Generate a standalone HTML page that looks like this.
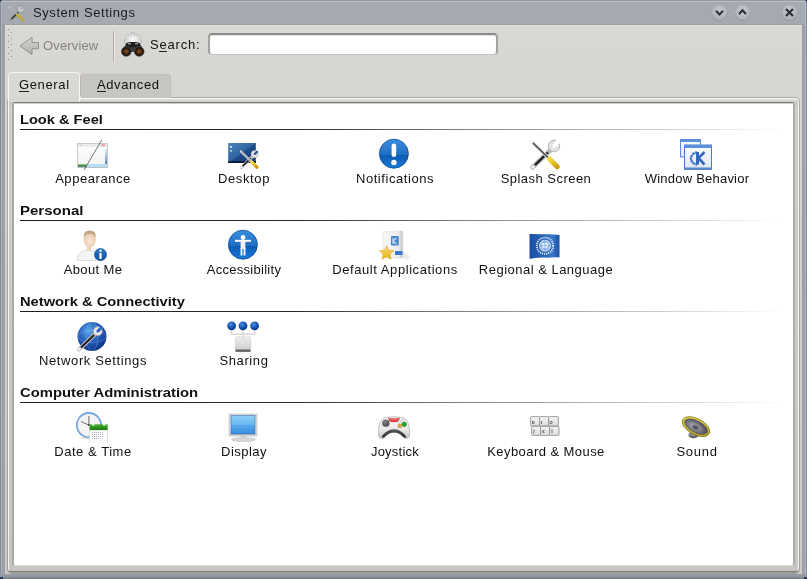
<!DOCTYPE html>
<html><head><meta charset="utf-8">
<style>
*{margin:0;padding:0;box-sizing:border-box}
html,body{width:807px;height:579px;overflow:hidden;background:#1b2c50}
body{font-family:"Liberation Sans",sans-serif;position:relative}
.txt,.sec,.lbl{will-change:transform}
.abs{position:absolute}
.txt{position:absolute;font-size:13px;line-height:15px;color:#111;white-space:nowrap}
.sec{position:absolute;left:20px;transform-origin:0 0;font-size:13px;line-height:15px;font-weight:bold;color:#111;white-space:nowrap}
.line{position:absolute;left:20px;width:765px;height:1px;background:linear-gradient(to right,#1e1e1e 0%,#2a2a2a 36%,#777 55%,#b4b4b4 75%,#e0e0e0 90%,#fff 100%)}
.lbl{position:absolute;font-size:13px;line-height:15px;color:#111;white-space:nowrap;text-align:center;width:200px}
.ic{position:absolute;width:32px;height:32px}
.ic svg{display:block}
.u{position:absolute;height:1px;background:#222}
</style></head><body>
<!-- window frame -->
<div class="abs" style="left:0;top:0;width:807px;height:579px;background:#a5aab2;border-radius:4px 4px 0 0"></div>
<div class="abs" style="left:0;top:0;width:807px;height:579px;border-radius:4px 4px 0 0;border-top:1px solid #969ca5;border-left:1px solid #858c97;border-right:1px solid #7e8590"></div>
<div class="abs" style="left:1px;top:1px;width:805px;height:1px;background:#b9bec5;border-radius:3px 3px 0 0"></div>
<div class="abs" style="left:2px;top:24px;width:3px;height:550px;background:#9ca0a7"></div>
<div class="abs" style="left:1px;top:2px;width:1px;height:577px;background:#acb1bb"></div>
<div class="abs" style="left:803px;top:24px;width:2px;height:550px;background:#9aa1ab"></div>
<div class="abs" style="left:805px;top:2px;width:1px;height:577px;background:#b3bac4"></div>
<div class="abs" style="left:0;top:574px;width:807px;height:5px;background:linear-gradient(#9aa0a8 0px,#8e949e 3px,#6e7580 5px)"></div>
<div class="abs" style="left:0;top:577px;width:3px;height:2px;background:#27375a"></div>
<div class="abs" style="left:804px;top:577px;width:3px;height:2px;background:#27375a"></div>
<!-- title icon -->
<svg class="abs" style="left:0;top:0" width="30" height="25" viewBox="0 0 30 25">
<line x1="10.5" y1="20" x2="18.5" y2="12" stroke="#9c9c9c" stroke-width="3.2" stroke-linecap="round"/>
<line x1="11.5" y1="19" x2="18" y2="12.5" stroke="#2e2e2e" stroke-width="1.5"/>
<circle cx="20.8" cy="9.3" r="3.3" fill="#cfcfcf" stroke="#7c7c7c" stroke-width="0.6"/>
<path d="M21 9.3 L22.5 5.8 L25 8 Z" fill="#a6abb3"/>
<circle cx="20.8" cy="9.3" r="1" fill="#a6abb3"/>
<line x1="9.7" y1="7.3" x2="16.8" y2="14.2" stroke="#d8d8d8" stroke-width="1.8" stroke-linecap="round"/>
<line x1="10.2" y1="7.8" x2="16.8" y2="14.2" stroke="#4a4a4a" stroke-width="0.7"/>
<line x1="17.5" y1="15" x2="23.3" y2="20.6" stroke="#b8a030" stroke-width="2.8" stroke-linecap="round"/>
<line x1="17.5" y1="14.6" x2="23" y2="20" stroke="#e0cc60" stroke-width="0.9" stroke-linecap="round"/>
</svg>
<div class="txt" style="left:33px;top:5px;color:#1a1a1a;letter-spacing:0.57px">System Settings</div>
<!-- title buttons -->
<svg class="abs" style="left:706px;top:0" width="101" height="25" viewBox="706 0 101 25">
<defs><radialGradient id="btn" cx="0.5" cy="0.35" r="0.6"><stop offset="0" stop-color="#c4c8ce"/><stop offset="1" stop-color="#aeb3ba"/></radialGradient></defs>
<circle cx="719.5" cy="13.3" r="7.8" fill="#8a9099" opacity="0.7"/>
<circle cx="719.5" cy="12.5" r="7.5" fill="url(#btn)"/>
<path d="M716 10.8 L719.5 14.5 L723 10.8" stroke="#2c3038" stroke-width="2" fill="none"/>
<circle cx="742.5" cy="13.3" r="7.8" fill="#8a9099" opacity="0.7"/>
<circle cx="742.5" cy="12.5" r="7.5" fill="url(#btn)"/>
<path d="M739 14 L742.5 10.3 L746 14" stroke="#2c3038" stroke-width="2" fill="none"/>
<circle cx="789.5" cy="13.3" r="7.8" fill="#8a9099" opacity="0.7"/>
<circle cx="789.5" cy="12.5" r="7.5" fill="url(#btn)"/>
<path d="M786 9 L793 16 M793 9 L786 16" stroke="#2c3038" stroke-width="2.2" fill="none"/>
</svg>
<!-- content -->
<div class="abs" style="left:4px;top:24px;width:799px;height:1px;background:#9ca1a8"></div>
<div class="abs" style="left:4px;top:24px;width:1px;height:550px;background:#9ca1a8"></div>
<div class="abs" style="left:802px;top:24px;width:1px;height:550px;background:#9ca1a8"></div>
<div class="abs" style="left:5px;top:25px;width:797px;height:549px;background:linear-gradient(#dad8d4 0px,#d7d5d1 70px,#cdcbc7 100%)"></div>
<div class="abs" style="left:5px;top:25px;width:797px;height:1px;background:#e2e0dc"></div>
<!-- toolbar handle -->
<svg class="abs" style="left:0;top:0" width="20" height="64">
<g fill="#8e8c88"><rect x="8" y="29" width="1" height="1"/><rect x="8" y="35" width="1" height="1"/><rect x="8" y="41" width="1" height="1"/><rect x="8" y="47" width="1" height="1"/><rect x="8" y="53" width="1" height="1"/><rect x="8" y="59" width="1" height="1"/>
<rect x="11" y="32" width="1" height="1"/><rect x="11" y="38" width="1" height="1"/><rect x="11" y="44" width="1" height="1"/><rect x="11" y="50" width="1" height="1"/><rect x="11" y="56" width="1" height="1"/></g>
</svg>
<!-- back arrow -->
<svg class="abs" style="left:0;top:0" width="45" height="60">
<defs><linearGradient id="arr" x1="0" y1="0" x2="0" y2="1"><stop offset="0" stop-color="#d6d5d3"/><stop offset="1" stop-color="#b0afac"/></linearGradient></defs>
<path d="M20 46 L32 37.3 L32 42.5 L38.5 42.5 L38.5 48.8 L32 48.8 L32 54.5 Z" fill="url(#arr)" stroke="#8c8b88" stroke-width="0.9" stroke-linejoin="round"/>
</svg>
<div class="txt" style="left:43px;top:38px;color:#858380;letter-spacing:0.15px">Overview</div>
<div class="abs" style="left:113px;top:31px;width:1px;height:31px;background:#b0ada8"></div>
<div class="abs" style="left:114px;top:31px;width:1px;height:31px;background:#eceae6"></div>
<!-- binoculars -->
<svg class="abs" style="left:118px;top:30px" width="30" height="30" viewBox="0 0 30 30">
<defs><radialGradient id="gear" cx="0.5" cy="0.4" r="0.6"><stop offset="0" stop-color="#ffffff"/><stop offset="1" stop-color="#cfcfcf"/></radialGradient>
<radialGradient id="lens" cx="0.5" cy="0.5" r="0.5"><stop offset="0" stop-color="#8a5020"/><stop offset="0.6" stop-color="#5a3210"/><stop offset="1" stop-color="#2a1606"/></radialGradient></defs>
<g transform="translate(15 11.5) scale(1.15)">
<g fill="#e8e8e8" stroke="#9c9c9c" stroke-width="0.5">
<rect x="-1.3" y="-7.4" width="2.6" height="2.6"/><rect x="-1.3" y="-7.4" width="2.6" height="2.6" transform="rotate(45)"/><rect x="-1.3" y="-7.4" width="2.6" height="2.6" transform="rotate(-45)"/><rect x="-1.3" y="-7.4" width="2.6" height="2.6" transform="rotate(90)"/><rect x="-1.3" y="-7.4" width="2.6" height="2.6" transform="rotate(-90)"/><rect x="-1.3" y="-7.4" width="2.6" height="2.6" transform="rotate(135)"/><rect x="-1.3" y="-7.4" width="2.6" height="2.6" transform="rotate(-135)"/></g>
<circle r="5.6" fill="url(#gear)"/>
</g>
<path d="M8.5 13 L12 12 L18 12 L21.5 13 L25 19.5 L5 19.5 Z" fill="#1e1e1e"/>
<rect x="10" y="13" width="3" height="1.4" fill="#9a9a9a"/><rect x="17" y="13" width="3" height="1.4" fill="#9a9a9a"/>
<rect x="12.5" y="17" width="5" height="5" fill="#3a3a3a"/>
<circle cx="8.3" cy="21.5" r="5" fill="#1a1a1a" stroke="#6a6a6a" stroke-width="0.5"/>
<circle cx="21.2" cy="21.5" r="5" fill="#1a1a1a" stroke="#6a6a6a" stroke-width="0.5"/>
<circle cx="8.3" cy="21.5" r="3.4" fill="url(#lens)"/>
<circle cx="21.2" cy="21.5" r="3.4" fill="url(#lens)"/>
</svg>
<div class="txt" style="left:150px;top:37px;letter-spacing:0.8px">Search:</div>
<div class="u" style="left:159px;top:51px;width:8px"></div>
<div class="abs" style="left:208px;top:33px;width:290px;height:22px;background:#fff;border-radius:4px;border-top:2px solid #8e8c88;border-left:2px solid #a4a29e;border-right:2px solid #a4a29e;border-bottom:1px solid #c4c2be;box-shadow:inset 0 1px 1px rgba(0,0,0,0.12)"></div>
<!-- tab panel -->
<div class="abs" style="left:7px;top:97px;width:793px;height:477px;border-radius:5px;background:linear-gradient(rgba(0,0,0,0.2),rgba(0,0,0,0.22));"></div>
<div class="abs" style="left:8px;top:98px;width:791px;height:474px;border-radius:4px;background:linear-gradient(#e6e4e1 0px,#d2d0cc 2px,#c6c4c0 4px,#d0cec9 8px,#c8c6c1 100%);border:1px solid #f5f4f2;border-bottom-color:#807e7a"></div>
<div class="abs" style="left:12px;top:102px;width:783px;height:464px;border-radius:3px;background:#fff;border-top:1px solid #7c7a77;border-left:2px solid #aba9a4;border-right:2px solid #aeaca7;border-bottom:1px solid #c6c4c0"></div>
<div class="abs" style="left:14px;top:103px;width:779px;height:1px;background:#cfcdc9"></div>
<div class="abs" style="left:14px;top:565px;width:779px;height:1px;background:#e0dedb"></div>
<div class="abs" style="left:8px;top:72px;width:72px;height:30px;background:#dad8d4;border-radius:4px 4px 0 0;border:1px solid #f5f4f2;border-bottom:none"></div>
<div class="abs" style="left:9px;top:98px;width:70px;height:4px;background:#d8d6d2"></div>
<div class="abs" style="left:79px;top:92px;width:8px;height:7px;background:#f5f4f2"></div>
<div class="abs" style="left:80px;top:74px;width:91px;height:24px;background:#c8c6c1;border-radius:4px 4px 0 4px;border-top:1px solid #c0beb9;border-right:1px solid #bebcb7;box-shadow:inset 1px 0 0 #b8b6b1"></div>
<div class="txt" style="left:19px;top:77px;letter-spacing:0.63px">General</div>
<div class="u" style="left:19px;top:91px;width:10px"></div>
<div class="txt" style="left:97px;top:77px;letter-spacing:0.59px">Advanced</div>
<div class="u" style="left:97px;top:91px;width:9px"></div>
<div class="sec" style="top:112px;transform:scaleX(1.125)">Look &amp; Feel</div>
<div class="line" style="top:129px"></div>
<div class="ic" style="left:76px;top:138px"><svg width="32" height="32" viewBox="0 0 32 32">
<defs><linearGradient id="apR" x1="0" y1="0" x2="0" y2="1"><stop offset="0" stop-color="#e0eef8"/><stop offset="0.5" stop-color="#8ab8e0"/><stop offset="1" stop-color="#3a6cb4"/></linearGradient>
<linearGradient id="apW" x1="0" y1="0" x2="0" y2="1"><stop offset="0" stop-color="#fdfdfd"/><stop offset="1" stop-color="#f2f2f2"/></linearGradient></defs>
<rect x="1.5" y="5.5" width="30" height="24" fill="url(#apW)" stroke="#c6c6c6" stroke-width="0.9"/>
<rect x="2" y="6" width="29" height="2.8" fill="#ececec"/>
<rect x="3.5" y="6.8" width="3" height="0.8" fill="#c0c0c0"/>
<rect x="25.2" y="6.3" width="4" height="1.9" fill="#e498a8"/>
<rect x="29.2" y="11" width="1.8" height="16" fill="url(#apR)"/>
<rect x="2" y="26" width="29" height="3.2" fill="#b8def4"/>
<rect x="2" y="26" width="8.5" height="1.3" fill="#80c868"/>
<rect x="2" y="27.3" width="8.5" height="1.4" fill="#2e6a24"/>
<rect x="2" y="29" width="29" height="0.6" fill="#a8b4bc"/>
<line x1="25.7" y1="2" x2="8" y2="32" stroke="#4a4a4a" stroke-width="0.75"/>
</svg></div>
<div class="lbl" style="left:-7.5px;top:171px;letter-spacing:0.56px">Appearance</div>
<div class="ic" style="left:227px;top:138px"><svg width="32" height="32" viewBox="0 0 32 32">
<defs><linearGradient id="dkB" x1="0" y1="0" x2="1" y2="1"><stop offset="0" stop-color="#4d86c0"/><stop offset="0.5" stop-color="#2f62a0"/><stop offset="0.5" stop-color="#1f4c88"/><stop offset="1" stop-color="#143a6e"/></linearGradient>
<linearGradient id="yel" x1="0" y1="0" x2="1" y2="1"><stop offset="0" stop-color="#f8dc40"/><stop offset="1" stop-color="#c89a10"/></linearGradient></defs>
<rect x="1.2" y="5" width="27.6" height="20" fill="url(#dkB)"/>
<rect x="1.2" y="23.2" width="27.6" height="1.8" fill="#0a1a30"/>
<rect x="3" y="8" width="2" height="1.8" fill="#d8e4f0"/>
<rect x="3" y="12" width="2" height="1.8" fill="#b8d4a0"/>
<g transform="translate(12 11) scale(0.63)">
<line x1="3.5" y1="29.5" x2="21" y2="12.5" stroke="#c8c8c8" stroke-width="5" stroke-linecap="round"/>
<line x1="6" y1="27" x2="19" y2="14.5" stroke="#1e1e1e" stroke-width="2.6"/>
<circle cx="3.8" cy="29.2" r="1.8" fill="#f4f4f4"/>
<circle cx="25" cy="8" r="5.8" fill="#e8e8e8" stroke="#a0a0a0" stroke-width="0.8"/><path d="M25 8 L28.5 4.5" stroke="#2a5a98" stroke-width="3.6" stroke-linecap="round"/>
<line x1="3" y1="4" x2="19" y2="19.5" stroke="#e8e8e8" stroke-width="3.6" stroke-linecap="round"/>
<line x1="3.5" y1="4.5" x2="19" y2="19.5" stroke="#5a5a5a" stroke-width="1.2"/>
<line x1="20.5" y1="21" x2="28.2" y2="28.8" stroke="url(#yel)" stroke-width="5.5" stroke-linecap="round"/>
</g>
</svg></div>
<div class="lbl" style="left:143.5px;top:171px;letter-spacing:0.61px">Desktop</div>
<div class="ic" style="left:378px;top:138px"><svg width="32" height="32" viewBox="0 0 32 32">
<defs><linearGradient id="nB" x1="0" y1="0" x2="0" y2="1"><stop offset="0" stop-color="#3a8ee0"/><stop offset="0.55" stop-color="#1f6cc0"/><stop offset="0.56" stop-color="#0c5cb4"/><stop offset="1" stop-color="#1a7ad8"/></linearGradient></defs>
<circle cx="15.9" cy="15.7" r="14.5" fill="url(#nB)" stroke="#0a4a94" stroke-width="0.8"/>
<rect x="13.6" y="5.5" width="4.6" height="13.5" rx="2.3" fill="#fff"/>
<circle cx="15.9" cy="24.4" r="2.7" fill="#fff"/>
</svg></div>
<div class="lbl" style="left:294.5px;top:171px;letter-spacing:0.56px">Notifications</div>
<div class="ic" style="left:529px;top:138px"><svg width="32" height="32" viewBox="0 0 32 32">
<defs><linearGradient id="yel2" x1="0" y1="0" x2="1" y2="1"><stop offset="0" stop-color="#f8dc40"/><stop offset="1" stop-color="#d0a010"/></linearGradient></defs>
<line x1="3.5" y1="29.5" x2="21" y2="12.5" stroke="#b8b8b8" stroke-width="4.6" stroke-linecap="round"/>
<line x1="6" y1="27" x2="19" y2="14.5" stroke="#1e1e1e" stroke-width="2.4"/>
<circle cx="3.8" cy="29.2" r="1.6" fill="#f4f4f4"/>
<circle cx="25" cy="8" r="5.8" fill="#e2e2e2" stroke="#a0a0a0" stroke-width="0.7"/><path d="M25 8 L28.5 4.5" stroke="#fff" stroke-width="3.6" stroke-linecap="round"/><path d="M26.5 6.5 L31 2" stroke="#fff" stroke-width="4.2"/>
<line x1="3" y1="4" x2="19" y2="19.5" stroke="#d8d8d8" stroke-width="3.4" stroke-linecap="round"/>
<line x1="3.5" y1="4.5" x2="19" y2="19.5" stroke="#3a3a3a" stroke-width="1.2"/>
<circle cx="3" cy="4" r="1.4" fill="#fafafa"/>
<line x1="20.5" y1="21" x2="28.2" y2="28.8" stroke="url(#yel2)" stroke-width="5" stroke-linecap="round"/>
</svg></div>
<div class="lbl" style="left:445.5px;top:171px;letter-spacing:0.47px">Splash Screen</div>
<div class="ic" style="left:680px;top:138px"><svg width="32" height="32" viewBox="0 0 32 32">
<defs><linearGradient id="wbW" x1="0" y1="0" x2="0" y2="1"><stop offset="0" stop-color="#ffffff"/><stop offset="1" stop-color="#dde4ee"/></linearGradient></defs>
<rect x="0.5" y="1.5" width="20" height="17.5" fill="url(#wbW)" stroke="#5a8ad0"/>
<rect x="0.5" y="1.5" width="20" height="2.5" fill="#5a92e0"/>
<rect x="4.5" y="7" width="27" height="24.5" fill="url(#wbW)" stroke="#4a7ec8"/>
<rect x="4.5" y="7" width="27" height="3" fill="#5a92e0"/>
<rect x="4.5" y="29.5" width="27" height="2" fill="#5a8ad0"/>
<path d="M17 14.5 A6 6 0 0 0 17 26.5" fill="none" stroke="#3a72c8" stroke-width="2.4" stroke-dasharray="1.8 1"/>
<path d="M16.5 15 A5.2 5.2 0 0 0 16.5 26" fill="none" stroke="#3a72c8" stroke-width="1"/>
<rect x="16" y="14" width="3" height="12.5" fill="#2e68c0"/>
<path d="M18.5 20.2 L24.5 14 M18.5 20.2 L24.5 26.5" stroke="#2e68c0" stroke-width="2.6" fill="none"/>
</svg></div>
<div class="lbl" style="left:596.5px;top:171px;letter-spacing:0.22px">Window Behavior</div>
<div class="sec" style="top:203px;transform:scaleX(1.155)">Personal</div>
<div class="line" style="top:220px"></div>
<div class="ic" style="left:76px;top:229px"><svg width="32" height="32" viewBox="0 0 32 32">
<defs><radialGradient id="face" cx="0.5" cy="0.6" r="0.6"><stop offset="0" stop-color="#fbe8d8"/><stop offset="1" stop-color="#e8c4a4"/></radialGradient>
<linearGradient id="iB" x1="0" y1="0" x2="0" y2="1"><stop offset="0" stop-color="#2e78c8"/><stop offset="1" stop-color="#0c4e9c"/></linearGradient></defs>
<path d="M1.5 31.5 C1.5 24 6 21.5 13 21.5 C18 21.5 20 23 20 26 L20 31.5 Z" fill="#f4f4f4" stroke="#d0d0d0" stroke-width="0.7"/>
<rect x="11" y="16" width="4" height="6" fill="#efd4bc"/>
<ellipse cx="13.7" cy="10.5" rx="6" ry="8" fill="url(#face)"/>
<path d="M7.8 9 C7.5 3 10 1.8 13.7 1.8 C17.5 1.8 20 3 19.7 9 C18.5 5.5 16 5 13.7 5 C11 5 9 5.5 7.8 9 Z" fill="#c4a482"/>
<circle cx="24.5" cy="25.5" r="6.4" fill="url(#iB)"/>
<circle cx="24.5" cy="21.8" r="1.3" fill="#fff"/>
<rect x="23.4" y="24" width="2.2" height="6" fill="#fff"/>
</svg></div>
<div class="lbl" style="left:-7.5px;top:262px;letter-spacing:0.36px">About Me</div>
<div class="ic" style="left:227px;top:229px"><svg width="32" height="32" viewBox="0 0 32 32">
<circle cx="15.9" cy="15.7" r="14.5" fill="url(#nB)" stroke="#0a4a94" stroke-width="0.8"/>
<circle cx="16" cy="8.5" r="2.4" fill="#fff"/>
<rect x="8" y="10.8" width="16" height="2" fill="#fff"/>
<rect x="13.6" y="12" width="4.8" height="8" fill="#eef2f8"/>
<rect x="13.6" y="19" width="1.8" height="7.5" fill="#fff"/>
<rect x="16.6" y="19" width="1.8" height="7.5" fill="#fff"/>
</svg></div>
<div class="lbl" style="left:143.5px;top:262px;letter-spacing:0.27px">Accessibility</div>
<div class="ic" style="left:378px;top:229px"><svg width="32" height="32" viewBox="0 0 32 32">
<defs><linearGradient id="boxG" x1="0" y1="0" x2="1" y2="0"><stop offset="0" stop-color="#f8f8f8"/><stop offset="0.8" stop-color="#ececec"/><stop offset="1" stop-color="#c8c8c8"/></linearGradient>
<linearGradient id="starG" x1="0" y1="0" x2="0" y2="1"><stop offset="0" stop-color="#f8d888"/><stop offset="1" stop-color="#e8b800"/></linearGradient></defs>
<path d="M25 22 L32 27 L29 31 L24 29 Z" fill="#e0e0e0" opacity="0.6"/>
<path d="M5 3 L22.5 1.8 L24.7 3 L24.7 28 L22.5 29.2 L5 28 Z" fill="url(#boxG)" stroke="#d8d8d8" stroke-width="0.5"/>
<rect x="22.5" y="2" width="2.2" height="27" fill="#d0d0d0"/>
<rect x="13" y="7" width="7.8" height="9.5" rx="0.8" fill="#4a86cc"/>
<path d="M15 9 V15 M15 12 L18.5 9 M15 12 L18.5 15" stroke="#cfe0f4" stroke-width="1.2" fill="none"/>
<rect x="17" y="22" width="7.5" height="4" fill="#3a78c8"/>
<path d="M8.6 16.7 L10.7 21.2 L15.8 21.8 L12 25.2 L13.1 30.3 L8.6 27.7 L4.1 30.3 L5.2 25.2 L1.4 21.8 L6.5 21.2 Z" fill="url(#starG)" stroke="#d8a820" stroke-width="0.6" stroke-linejoin="round"/>
</svg></div>
<div class="lbl" style="left:294.5px;top:262px;letter-spacing:0.57px">Default Applications</div>
<div class="ic" style="left:529px;top:229px"><svg width="32" height="32" viewBox="0 0 32 32">
<defs><linearGradient id="flG" x1="0" y1="0" x2="1" y2="0"><stop offset="0" stop-color="#1a4ea4"/><stop offset="0.55" stop-color="#2c68bc"/><stop offset="0.75" stop-color="#3c7ccc"/><stop offset="1" stop-color="#1a50a8"/></linearGradient></defs>
<path d="M0.5 5 C6 4.6 10 5.4 15 5.2 C21 5 26 5.5 30.5 6 L30.5 28.5 C25 28 20 29 15 28.6 C9 28.2 5 29.6 0.5 29.8 Z" fill="url(#flG)"/>
<circle cx="16" cy="16.7" r="8.2" fill="none" stroke="#e4eefa" stroke-width="1.7" stroke-dasharray="1.2 0.9"/>
<circle cx="16" cy="16.7" r="5.6" fill="#9cc0ec"/>
<circle cx="16" cy="16.7" r="5.6" fill="none" stroke="#f0f6fc" stroke-width="0.7"/>
<path d="M13 14.5 C14.5 13.5 15.5 15 17 14 C18.5 13.2 19 15 19.5 16.5 C18.5 18.5 17 19.5 15 19 C13.5 18.5 12.5 17 13 14.5 Z" fill="#f4f8fc"/>
<path d="M16 11.1 V22.3 M10.4 16.7 H21.6" stroke="#5a8ed8" stroke-width="0.6"/>
</svg></div>
<div class="lbl" style="left:445.5px;top:262px;letter-spacing:0.49px">Regional &amp; Language</div>
<div class="sec" style="top:294px;transform:scaleX(1.13)">Network &amp; Connectivity</div>
<div class="line" style="top:311px"></div>
<div class="ic" style="left:76px;top:320px"><svg width="32" height="32" viewBox="0 0 32 32">
<defs><radialGradient id="glG" cx="0.4" cy="0.3" r="0.75"><stop offset="0" stop-color="#5aa8ec"/><stop offset="0.45" stop-color="#2a64c0"/><stop offset="1" stop-color="#0a2e80"/></radialGradient></defs>
<circle cx="16" cy="16.5" r="14.5" fill="url(#glG)"/>
<ellipse cx="16" cy="16.5" rx="14" ry="6" fill="none" stroke="#8cc0f0" stroke-width="0.5" opacity="0.6"/>
<ellipse cx="16" cy="16.5" rx="6" ry="14" fill="none" stroke="#8cc0f0" stroke-width="0.5" opacity="0.6"/>
<line x1="3" y1="29.5" x2="19" y2="14" stroke="#c4c4c4" stroke-width="4" stroke-linecap="round"/>
<line x1="5" y1="27.5" x2="18" y2="15" stroke="#1e1e1e" stroke-width="2"/>
<circle cx="3.2" cy="29.3" r="1.4" fill="#f4f4f4"/>
<circle cx="21.8" cy="11.2" r="4.6" fill="#e6e6e6" stroke="#8a8a8a" stroke-width="0.6"/>
<path d="M21.8 11.2 L24.8 8.2" stroke="#2a60b8" stroke-width="2.8" stroke-linecap="round"/>
<path d="M23.5 9.5 L25.8 7.2" stroke="#3a78cc" stroke-width="3"/>
</svg></div>
<div class="lbl" style="left:-7.5px;top:353px;letter-spacing:0.61px">Network Settings</div>
<div class="ic" style="left:227px;top:320px"><svg width="32" height="32" viewBox="0 0 32 32">
<defs><radialGradient id="ball" cx="0.4" cy="0.35" r="0.65"><stop offset="0" stop-color="#4a90e0"/><stop offset="0.7" stop-color="#0e4aa8"/><stop offset="1" stop-color="#0a3a88"/></radialGradient>
<linearGradient id="drv" x1="0" y1="0" x2="0" y2="1"><stop offset="0" stop-color="#f0f0f0"/><stop offset="1" stop-color="#c8c8c8"/></linearGradient></defs>
<path d="M4.5 9 V14.2 H27.6 V9 M16 9 V17" stroke="#d8d8d8" stroke-width="1.5" fill="none"/>
<circle cx="4.6" cy="5.8" r="4.4" fill="url(#ball)"/>
<circle cx="16" cy="5.8" r="4.4" fill="url(#ball)"/>
<circle cx="27.6" cy="5.8" r="4.4" fill="url(#ball)"/>
<rect x="8.4" y="17" width="15.2" height="15" rx="1.5" fill="url(#drv)" stroke="#c0c0c0" stroke-width="0.6"/>
<circle cx="16" cy="23.5" r="4" fill="none" stroke="#dadada" stroke-width="1"/>
<rect x="8.6" y="29.5" width="14.8" height="2.3" fill="#606060"/>
</svg></div>
<div class="lbl" style="left:143.5px;top:353px;letter-spacing:0.61px">Sharing</div>
<div class="sec" style="top:385px;transform:scaleX(1.14)">Computer Administration</div>
<div class="line" style="top:402px"></div>
<div class="ic" style="left:76px;top:411px"><svg width="32" height="32" viewBox="0 0 32 32">
<defs><radialGradient id="clk" cx="0.5" cy="0.5" r="0.5"><stop offset="0.8" stop-color="#f4f4f6"/><stop offset="1" stop-color="#d8dce4"/></radialGradient>
<linearGradient id="grn" x1="0" y1="0" x2="0" y2="1"><stop offset="0" stop-color="#4ab030"/><stop offset="1" stop-color="#1a7a10"/></linearGradient></defs>
<ellipse cx="13" cy="27" rx="9" ry="1.5" fill="#c8c8c8" opacity="0.5"/>
<circle cx="12.9" cy="14.1" r="12.2" fill="url(#clk)" stroke="#6aa0e0" stroke-width="1.6"/>
<line x1="12.9" y1="14.1" x2="5" y2="10.5" stroke="#444" stroke-width="0.8"/>
<line x1="12.9" y1="14.1" x2="12.9" y2="5" stroke="#444" stroke-width="0.8"/>
<circle cx="12.9" cy="14.1" r="1" fill="#333"/>
<rect x="13.6" y="14" width="18" height="18.3" fill="#fafafa" stroke="#d0d0d0" stroke-width="0.6"/>
<rect x="13.6" y="13.3" width="18" height="5.8" fill="url(#grn)"/>
<rect x="16" y="12.5" width="2.5" height="2" fill="#e8f8e0"/>
<rect x="27" y="12.5" width="2.5" height="2" fill="#e8f8e0"/>
<g fill="#b0b0c0"><rect x="16" y="21" width="1" height="1"/><rect x="18" y="21" width="1" height="1"/><rect x="20" y="21" width="1" height="1"/><rect x="22" y="21" width="1" height="1"/><rect x="24" y="21" width="1" height="1"/><rect x="26" y="21" width="1" height="1"/>
<rect x="16" y="23" width="1" height="1"/><rect x="18" y="23" width="1" height="1"/><rect x="20" y="23" width="1" height="1"/><rect x="22" y="23" width="1" height="1"/><rect x="24" y="23" width="1" height="1"/><rect x="26" y="23" width="1" height="1"/>
<rect x="16" y="25" width="1" height="1"/><rect x="18" y="25" width="1" height="1"/><rect x="20" y="25" width="1" height="1"/><rect x="22" y="25" width="1" height="1"/><rect x="24" y="25" width="1" height="1"/><rect x="26" y="25" width="1" height="1"/>
<rect x="16" y="27" width="1" height="1"/><rect x="18" y="27" width="1" height="1"/><rect x="20" y="27" width="1" height="1"/><rect x="22" y="27" width="1" height="1"/><rect x="24" y="27" width="1" height="1"/></g>
</svg></div>
<div class="lbl" style="left:-7.5px;top:444px;letter-spacing:0.55px">Date &amp; Time</div>
<div class="ic" style="left:227px;top:411px"><svg width="32" height="32" viewBox="0 0 32 32">
<defs><linearGradient id="scr" x1="0" y1="0" x2="0" y2="1"><stop offset="0" stop-color="#8ed0f6"/><stop offset="0.5" stop-color="#6ab8f0"/><stop offset="0.52" stop-color="#5aa8ec"/><stop offset="1" stop-color="#3a8ee0"/></linearGradient></defs>
<ellipse cx="16.5" cy="28.5" rx="12" ry="2" fill="#d8d8d8" stroke="#b8b8b8" stroke-width="0.5"/>
<rect x="13.5" y="24" width="6" height="4" fill="#d0d0d0"/>
<rect x="2" y="3" width="28" height="22" fill="#dde2e8" stroke="#b4b8bc" stroke-width="0.6"/><rect x="2.3" y="22.8" width="27.4" height="2" fill="#c8ccd0"/>
<rect x="4" y="4.6" width="24" height="18.4" fill="url(#scr)" stroke="#2a5a9a" stroke-width="0.5"/>
</svg></div>
<div class="lbl" style="left:143.5px;top:444px;letter-spacing:0.47px">Display</div>
<div class="ic" style="left:378px;top:411px"><svg width="32" height="32" viewBox="0 0 32 32">
<defs><linearGradient id="pad" x1="0" y1="0" x2="0" y2="1"><stop offset="0" stop-color="#fafafa"/><stop offset="0.6" stop-color="#e8e8e8"/><stop offset="1" stop-color="#c4c4c4"/></linearGradient>
<linearGradient id="belly" x1="0" y1="0" x2="0" y2="1"><stop offset="0" stop-color="#5a5a5a"/><stop offset="1" stop-color="#2a2a2a"/></linearGradient>
<radialGradient id="stick" cx="0.4" cy="0.35" r="0.7"><stop offset="0" stop-color="#8a8a8a"/><stop offset="1" stop-color="#3e3e3e"/></radialGradient></defs>
<path d="M6 7 C10 5.5 22 5.5 26 7 C30 8.5 32 17 31.8 23 C31.5 28 28 28.5 26 26.5 C23 23.5 20 21 16 21 C12 21 9 23.5 6 26.5 C4 28.5 0.5 28 0.3 23 C0 17 2 8.5 6 7 Z" fill="url(#pad)" stroke="#a8a8a8" stroke-width="0.7"/>
<path d="M3.5 26 C6.5 21.5 11 18.3 16 18.3 C21 18.3 25.5 21.5 28.5 26 C27 27 26 26.8 25 25.8 C22 23 19.5 21.6 16 21.6 C12.5 21.6 10 23 7 25.8 C6 26.8 5 27 3.5 26 Z" fill="url(#belly)"/>
<path d="M10 6.6 C13 7.8 19 7.8 22 6.6 L20.5 10.5 C17.5 11.6 14.5 11.6 11.5 10.5 Z" fill="#d83a3a"/>
<path d="M11.5 7.5 C14 8.3 18 8.3 20.5 7.5 L20 9 C17.5 9.8 14.5 9.8 12 9 Z" fill="#f08080" opacity="0.7"/>
<circle cx="7.8" cy="12.2" r="3.6" fill="url(#stick)"/>
<circle cx="21.5" cy="10.8" r="1.5" fill="#f4f4f4" stroke="#b0b0b0" stroke-width="0.5"/>
<circle cx="25" cy="9" r="1.3" fill="#f4f4f4" stroke="#b0b0b0" stroke-width="0.5"/>
<circle cx="26.2" cy="13.3" r="2.4" fill="#28a028" stroke="#1a7a1a" stroke-width="0.4"/>
<circle cx="21.9" cy="15" r="2" fill="#d8a848" stroke="#b08020" stroke-width="0.4"/>
</svg></div>
<div class="lbl" style="left:294.5px;top:444px;letter-spacing:0.25px">Joystick</div>
<div class="ic" style="left:529px;top:411px"><svg width="32" height="32" viewBox="0 0 32 32">
<defs><linearGradient id="key" x1="0" y1="0" x2="0" y2="1"><stop offset="0" stop-color="#f4f4f4"/><stop offset="1" stop-color="#dcdcdc"/></linearGradient></defs>
<g stroke="#8a8a8a" stroke-width="0.8" fill="url(#key)">
<rect x="1.6" y="5.6" width="9" height="9.4" rx="0.8"/><rect x="10.6" y="5.6" width="9" height="9.4" rx="0.8"/><rect x="19.6" y="5.6" width="9.8" height="9.4" rx="0.8"/>
<rect x="2.6" y="15.4" width="9" height="9" rx="0.8"/><rect x="11.6" y="15.4" width="9" height="9" rx="0.8"/><rect x="20.6" y="15.4" width="9.4" height="9" rx="0.8"/></g>
<g stroke="#555" stroke-width="0.8" fill="none"><path d="M3.5 10 V12.5 H5 V10"/><path d="M12.5 10 V13"/><circle cx="22" cy="11.5" r="1.2"/><path d="M5 18.5 V21.5 L4 22"/><path d="M14 19 V22 M14 20.5 L15.5 19 M14 20.5 L15.5 22"/><path d="M23 18 V22"/></g>
</svg></div>
<div class="lbl" style="left:445.5px;top:444px;letter-spacing:0.44px">Keyboard &amp; Mouse</div>
<div class="ic" style="left:680px;top:411px"><svg width="32" height="32" viewBox="0 0 32 32">
<defs><radialGradient id="cone" cx="0.45" cy="0.55" r="0.6"><stop offset="0" stop-color="#b8b8c2"/><stop offset="0.5" stop-color="#7a7a86"/><stop offset="1" stop-color="#3e3e48"/></radialGradient>
<linearGradient id="rim" x1="0" y1="0" x2="1" y2="1"><stop offset="0" stop-color="#f0dc50"/><stop offset="1" stop-color="#b09a18"/></linearGradient></defs>
<ellipse cx="13.5" cy="24" rx="5" ry="3.2" fill="#5a5a5e"/>
<ellipse cx="13.5" cy="23.3" rx="4" ry="2.2" fill="#8a8a90"/>
<ellipse cx="16" cy="15.6" rx="15" ry="8" transform="rotate(28 16 15.6)" fill="url(#rim)" stroke="#7a6a10" stroke-width="0.7"/>
<ellipse cx="16" cy="15.6" rx="12.8" ry="6.2" transform="rotate(28 16 15.6)" fill="url(#cone)"/>
<ellipse cx="15.5" cy="16.5" rx="3.6" ry="2.4" transform="rotate(28 15.5 16.5)" fill="#55555e" stroke="#9a9aa4" stroke-width="0.6"/>
</svg></div>
<div class="lbl" style="left:596.5px;top:444px;letter-spacing:0.73px">Sound</div>
</body></html>
